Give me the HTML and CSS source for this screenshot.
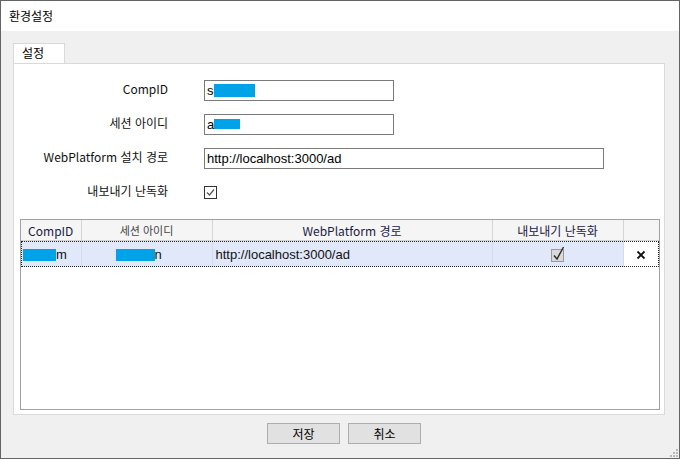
FILE: index.html
```html
<!DOCTYPE html>
<html lang="ko">
<head>
    <meta charset="UTF-8">
    <title>환경설정</title>
    <link rel="stylesheet" href="styles.css">
</head>
<body>
    <div class="window">
        <!-- Title bar -->
        <header class="titlebar">환경설정</header>

        <main class="client">
            <!-- Tab strip -->
            <div class="tabs">
                <div class="tab active">설정</div>
            </div>

            <!-- Tab page -->
            <section class="tab-page">
                <div class="form">
                    <div class="form-row">
                        <label class="form-label">CompID</label>
                        <div class="field short"><span>s</span><span class="mask mask-1"></span></div>
                    </div>
                    <div class="form-row">
                        <label class="form-label">세션 아이디</label>
                        <div class="field short"><span>a</span><span class="mask mask-2"></span></div>
                    </div>
                    <div class="form-row">
                        <label class="form-label">WebPlatform 설치 경로</label>
                        <div class="field long">http://localhost:3000/ad</div>
                    </div>
                    <div class="form-row">
                        <label class="form-label">내보내기 난독화</label>
                        <span class="checkbox">
                            <svg width="13" height="13" viewBox="0 0 13 13">
                                <rect x="0.5" y="0.5" width="12" height="12" fill="#fff" stroke="#333"/>
                                <path d="M3 6.5 L5.5 9 L10 3.5" fill="none" stroke="#555" stroke-width="1.2"/>
                            </svg>
                        </span>
                    </div>
                </div>

                <!-- Grid -->
                <div class="grid">
                    <table>
                        <colgroup>
                            <col class="c-id">
                            <col class="c-session">
                            <col class="c-path">
                            <col class="c-obf">
                            <col class="c-del">
                        </colgroup>
                        <thead>
                            <tr>
                                <th>CompID</th>
                                <th class="light">세션 아이디</th>
                                <th>WebPlatform 경로</th>
                                <th>내보내기 난독화</th>
                                <th></th>
                            </tr>
                        </thead>
                        <tbody>
                            <tr class="selected">
                                <td class="left"><span class="mask mask-3"></span>m</td>
                                <td class="left session"><span class="mask mask-4"></span>n</td>
                                <td class="left pad">http://localhost:3000/ad</td>
                                <td>
                                    <svg class="grid-check" width="14" height="16" viewBox="0 0 14 16">
                                        <rect x="0.5" y="3.5" width="12" height="12" fill="#d9d9d9" stroke="#9a9a9a"/>
                                        <path d="M3 9.5 L6 13 L12.5 1" fill="none" stroke="#2b2b2b" stroke-width="1.4"/>
                                    </svg>
                                </td>
                                <td class="del">
                                    <svg class="del-x" width="10" height="10" viewBox="0 0 10 10">
                                        <path d="M1.5 1.5 L8.5 8.5 M8.5 1.5 L1.5 8.5" stroke="#111" stroke-width="1.8"/>
                                    </svg>
                                </td>
                            </tr>
                        </tbody>
                    </table>
                </div>
            </section>

            <!-- Buttons -->
            <div class="buttons">
                <button class="btn">저장</button>
                <button class="btn">취소</button>
            </div>

            <svg class="grip" width="8" height="8" viewBox="0 0 8 8">
                <rect x="6" y="0" width="2" height="2" fill="#b8b8b8"/>
                <rect x="3" y="3" width="2" height="2" fill="#b8b8b8"/>
                <rect x="6" y="3" width="2" height="2" fill="#b8b8b8"/>
                <rect x="0" y="6" width="2" height="2" fill="#b8b8b8"/>
                <rect x="3" y="6" width="2" height="2" fill="#b8b8b8"/>
                <rect x="6" y="6" width="2" height="2" fill="#b8b8b8"/>
            </svg>
        </main>
    </div>
</body>
</html>
```

FILE: styles.css
```css
/* General */
html, body {
    margin: 0;
    padding: 0;
    background: #ffffff;
}

body {
    font-family: "Liberation Sans", "Noto Sans CJK KR", sans-serif;
    font-size: 12px;
    color: #000;
}

.window {
    width: 680px;
    height: 459px;
    box-sizing: border-box;
    border: 1px solid #646464;
    display: flex;
    flex-direction: column;
}

/* Title bar */
.titlebar {
    height: 30px;
    line-height: 30px;
    padding-left: 8px;
    background: #ffffff;
    font-family: "Noto Sans CJK KR", sans-serif;
    font-size: 12px;
}

.client {
    flex: 1;
    position: relative;
    background: #f0f0f0;
    padding: 12px 14px 0 12px;
}

/* Tabs */
.tabs {
    display: flex;
    height: 20px;
}

.tab {
    width: 52px;
    height: 20px;
    box-sizing: border-box;
    border: 1px solid #d9d9d9;
    border-bottom: none;
    background: #ffffff;
    font-family: "Noto Sans CJK KR", sans-serif;
    font-size: 12px;
    line-height: 18px;
    padding-left: 8px;
}

.tab-page {
    height: 352px;
    box-sizing: border-box;
    border: 1px solid #d9d9d9;
    background: #ffffff;
    padding: 9px 4px 0 6px;
}

/* Form */
.form-row {
    display: flex;
    align-items: center;
    height: 34px;
}

.form-label {
    width: 148px;
    text-align: right;
    margin-right: 36px;
    margin-bottom: 4px;
    font-family: "Noto Sans CJK KR", sans-serif;
    font-size: 12px;
    color: #111;
}

.field {
    height: 21px;
    box-sizing: border-box;
    border: 1px solid #7a7a7a;
    padding-left: 2px;
    display: flex;
    align-items: center;
    font-size: 13px;
}

.field.short { width: 190px; }
.field.long { width: 400px; }

.mask {
    display: inline-block;
    background: #00a2e8;
}

.mask-1 { width: 41px; height: 13px; }
.mask-2 { width: 26px; height: 10px; }
.mask-3 { width: 33px; height: 12px; }
.mask-4 { width: 39px; height: 12px; }

.checkbox {
    display: flex;
    height: 13px;
    margin-top: 1px;
}

/* Grid */
.grid {
    margin-top: 10px;
    height: 191px;
    box-sizing: border-box;
    border: 1px solid #a0a0a8;
    background: #ffffff;
}

.grid table {
    width: 100%;
    border-collapse: collapse;
    table-layout: fixed;
}

.c-id { width: 60px; }
.c-session { width: 131px; }
.c-path { width: 280px; }
.c-obf { width: 131px; }

.grid th {
    height: 20px;
    padding: 0;
    background: #f5f5f5;
    border-right: 1px solid #d5d5d5;
    border-bottom: 1px solid #d5d5d5;
    font-family: "Noto Sans CJK KR", sans-serif;
    font-weight: normal;
    font-size: 12px;
    color: #1a1a48;
}

.grid th:last-child { border-right: none; }
.grid th.light { color: #444; font-size: 11px; }

.grid td {
    height: 26px;
    padding: 0;
    text-align: center;
    font-size: 13px;
    color: #111;
    border-right: 1px solid #d6dbe6;
    white-space: nowrap;
}

.grid td.left { text-align: left; padding-left: 2px; }
.grid td.session { padding-left: 34px; }
.grid td.pad { padding-left: 3px; }

.selected {
    background: #e0e8f9;
    outline: 1px dotted #222;
    outline-offset: -1px;
}

.selected td .mask { vertical-align: -2px; }

.selected td.del {
    background: #ffffff;
    border-right: none;
}

.grid-check { vertical-align: -3px; }
.del-x { vertical-align: -1px; }

/* Buttons */
.buttons {
    display: flex;
    justify-content: center;
    gap: 8px;
    margin-top: 8px;
    padding-left: 10px;
}

.btn {
    width: 73px;
    height: 21px;
    padding: 0;
    background: #e1e1e1;
    border: 1px solid #adadad;
    font-family: "Noto Sans CJK KR", sans-serif;
    font-size: 12px;
    color: #000;
}

.grip {
    position: absolute;
    right: 1px;
    bottom: 1px;
}
```
